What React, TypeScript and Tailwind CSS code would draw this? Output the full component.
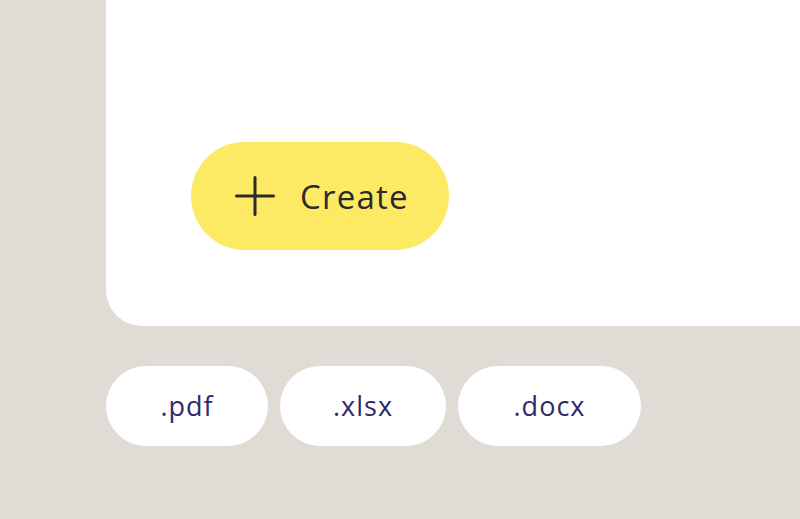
export default function App() {
  return (
    <div className="w-[800px] h-[519px] overflow-hidden bg-[#e0dbd5] font-['Open_Sans','Noto_Sans',sans-serif]">
      <div className="ml-[106px] h-[326px] bg-white rounded-bl-[36px] pl-[85px] pt-[142px]">
        <button className="flex items-center w-[258px] h-[108px] rounded-full bg-[#fcea64] pl-[44px] text-[#2a2a2a]">
          <svg width="40" height="40" viewBox="0 0 40 40" fill="none" stroke="currentColor" strokeWidth="3" strokeLinecap="round">
            <path d="M20 1.5v37M1.5 20h37" />
          </svg>
          <span className="ml-[25px] text-[33px] leading-none tracking-[1.2px]">Create</span>
        </button>
      </div>
      <div className="ml-[106px] mt-[40px] flex gap-3">
        {[
          { label: '.pdf', w: 'w-[162px]' },
          { label: '.xlsx', w: 'w-[166px]' },
          { label: '.docx', w: 'w-[183px]' },
        ].map((c) => (
          <div
            key={c.label}
            className={`${c.w} h-[80px] rounded-full bg-white flex items-center justify-center text-[27px] tracking-[1px] text-[#2e2a6b]`}
          >
            {c.label}
          </div>
        ))}
      </div>
    </div>
  );
}
